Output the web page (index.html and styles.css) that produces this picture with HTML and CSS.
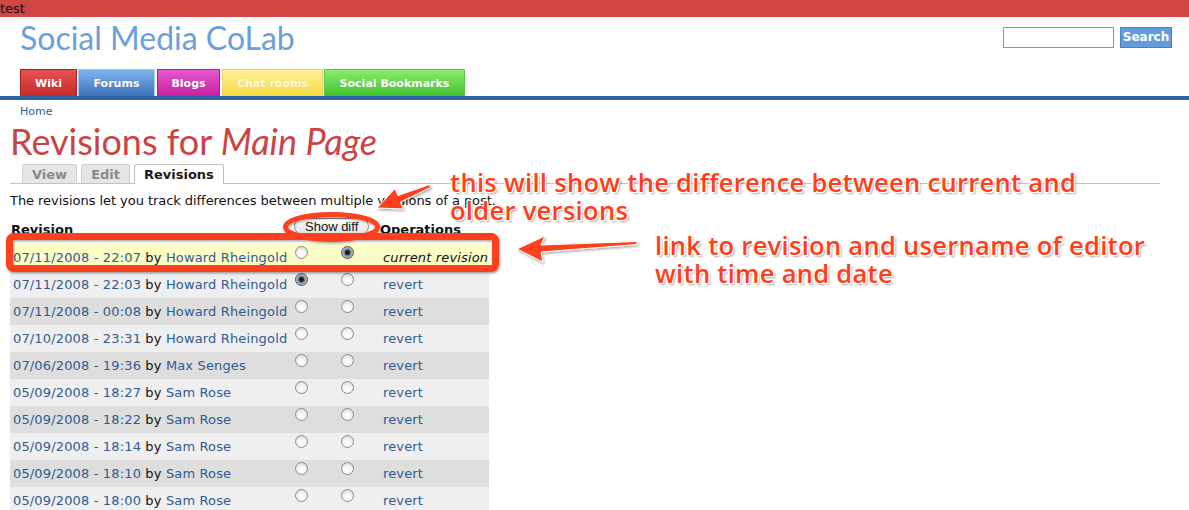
FILE: index.html
```html
<!DOCTYPE html>
<html lang="en">
<head>
<meta charset="utf-8">
<title>Revisions for Main Page | Social Media CoLab</title>
<link rel="stylesheet" href="styles.css">
</head>
<body>
<div class="topbar">test</div>
<header class="masthead">
  <div class="brand-row">
    <h1 class="site-name">Social Media CoLab</h1>
    <form class="search">
      <input class="search-input" type="text" aria-label="Search">
      <button class="search-btn" type="button">Search</button>
    </form>
  </div>
  <nav class="primary">
    <a class="ptab ptab-wiki" href="#">Wiki</a>
    <a class="ptab ptab-forums" href="#">Forums</a>
    <a class="ptab ptab-blogs" href="#">Blogs</a>
    <a class="ptab ptab-chat" href="#">Chat rooms</a>
    <a class="ptab ptab-bookmarks" href="#">Social Bookmarks</a>
  </nav>
</header>
<main class="content">
  <div class="breadcrumb"><a href="#">Home</a></div>
  <h2 class="page-title">Revisions for <em>Main Page</em></h2>
  <ul class="tabs">
    <li class="tab"><a href="#">View</a></li>
    <li class="tab"><a href="#">Edit</a></li>
    <li class="tab tab-active"><a href="#">Revisions</a></li>
  </ul>
  <p class="intro">The revisions let you track differences between multiple versions of a post.</p>
  <table class="revisions">
    <colgroup><col class="c-rev"><col class="c-r1"><col class="c-r2"><col class="c-ops"></colgroup>
    <thead>
      <tr><th>Revision</th><th colspan="2" class="th-diff"><span class="diff-btn">Show diff</span></th><th>Operations</th></tr>
    </thead>
    <tbody>
      <tr class="row-current"><td><a href="#">07/11/2008 - 22:07</a> by <a href="#">Howard Rheingold</a></td><td><span class="radio"></span></td><td><span class="radio on"></span></td><td><em>current revision</em></td></tr>
      <tr class="row-odd"><td><a href="#">07/11/2008 - 22:03</a> by <a href="#">Howard Rheingold</a></td><td><span class="radio on"></span></td><td><span class="radio"></span></td><td><a href="#">revert</a></td></tr>
      <tr class="row-even"><td><a href="#">07/11/2008 - 00:08</a> by <a href="#">Howard Rheingold</a></td><td><span class="radio"></span></td><td><span class="radio"></span></td><td><a href="#">revert</a></td></tr>
      <tr class="row-odd"><td><a href="#">07/10/2008 - 23:31</a> by <a href="#">Howard Rheingold</a></td><td><span class="radio"></span></td><td><span class="radio"></span></td><td><a href="#">revert</a></td></tr>
      <tr class="row-even"><td><a href="#">07/06/2008 - 19:36</a> by <a href="#">Max Senges</a></td><td><span class="radio"></span></td><td><span class="radio"></span></td><td><a href="#">revert</a></td></tr>
      <tr class="row-odd"><td><a href="#">05/09/2008 - 18:27</a> by <a href="#">Sam Rose</a></td><td><span class="radio"></span></td><td><span class="radio"></span></td><td><a href="#">revert</a></td></tr>
      <tr class="row-even"><td><a href="#">05/09/2008 - 18:22</a> by <a href="#">Sam Rose</a></td><td><span class="radio"></span></td><td><span class="radio"></span></td><td><a href="#">revert</a></td></tr>
      <tr class="row-odd"><td><a href="#">05/09/2008 - 18:14</a> by <a href="#">Sam Rose</a></td><td><span class="radio"></span></td><td><span class="radio"></span></td><td><a href="#">revert</a></td></tr>
      <tr class="row-even"><td><a href="#">05/09/2008 - 18:10</a> by <a href="#">Sam Rose</a></td><td><span class="radio"></span></td><td><span class="radio"></span></td><td><a href="#">revert</a></td></tr>
      <tr class="row-odd"><td><a href="#">05/09/2008 - 18:00</a> by <a href="#">Sam Rose</a></td><td><span class="radio"></span></td><td><span class="radio"></span></td><td><a href="#">revert</a></td></tr>
    </tbody>
  </table>
</main>

<div class="annotations">
  <svg class="marks" width="1189" height="510" viewBox="0 0 1189 510">
    <defs>
      <filter id="sh" x="-10%" y="-30%" width="130%" height="180%">
        <feDropShadow dx="1" dy="1.5" stdDeviation="1.2" flood-color="#000" flood-opacity="0.35"/>
      </filter>
    </defs>
    <g filter="url(#sh)" fill="none" stroke="#ff3f1c">
      <rect x="9.5" y="236.5" width="486" height="32" rx="4" stroke-width="7"/>
      <ellipse cx="331.5" cy="227" rx="46" ry="12.5" stroke-width="5"/>
    </g>
    <g filter="url(#sh)" fill="#ff3f1c" stroke="#fff" stroke-width="1" stroke-linejoin="round">
      <polygon points="377,208 403.4,209 400.5,202 430.6,187.4 429.4,184.6 397.9,195.6 395,188.6"/>
      <polygon points="517,249 545,236 541,245 637,241.5 637,244.5 541,252 543,262"/>
    </g>
  </svg>
  <p class="note note-diff">this will show the difference between current and<br>older versions</p>
  <p class="note note-link">link to revision and username of editor<br>with time and date</p>
</div>
</body>
</html>
```

FILE: styles.css
```css
* { box-sizing: border-box; }

html, body {
  margin: 0;
  padding: 0;
  background: #fff;
}

body {
  position: relative;
  width: 1189px;
  height: 510px;
  overflow: hidden;
  font-family: "DejaVu Sans", Verdana, sans-serif;
  color: #111;
}

a { color: #2f5c92; text-decoration: none; }

.topbar {
  height: 17px;
  background: #d24545;
  color: #1a0a0a;
  font-size: 13px;
  line-height: 17px;
}

/* masthead */
.masthead {
  border-bottom: 4px solid #2c63a1;
}

.brand-row {
  display: flex;
  justify-content: space-between;
  align-items: flex-start;
  height: 52px;
  padding: 0 17px 0 20px;
}

.site-name {
  margin: 3px 0 0;
  font-family: Lato, "DejaVu Sans", sans-serif;
  font-weight: 400;
  font-size: 32px;
  line-height: 36px;
  color: #6a9fdc;
}

.search {
  display: flex;
  gap: 6px;
  margin-top: 10px;
}

.search-input {
  width: 111px;
  height: 21px;
  border: 1px solid #7f99b5;
  background: #fff;
  margin: 0;
  padding: 0;
}

.search-btn {
  width: 52px;
  height: 21px;
  margin: 0;
  padding: 0;
  border: 1px solid #4d7fbb;
  background: #649bdc;
  color: #fff;
  font-family: "DejaVu Sans", sans-serif;
  font-weight: bold;
  font-size: 12px;
  line-height: 19px;
}

.primary {
  display: flex;
  gap: 1px;
  padding-left: 20px;
  height: 27px;
}

.ptab {
  display: flex;
  align-items: center;
  justify-content: center;
  height: 27px;
  color: #fff;
  font-weight: bold;
  font-size: 11px;
  border: 1px solid rgba(0,0,0,0.12);
  border-bottom: 0;
  text-shadow: 0 0 1px rgba(0,0,0,0.15);
}
.ptab-wiki { width: 57px; background: linear-gradient(#e65252, #c42a2a); border-color: #a82222; }
.ptab-forums { width: 77px; background: linear-gradient(#7cb4f0, #3d72b8); border-color: #9ec6ef; }
.ptab-blogs { width: 63px; margin-left: 1px; background: linear-gradient(#e858cf, #c6209f); border-color: #b01f8c; }
.ptab-chat { width: 101px; margin-left: 1px; background: linear-gradient(#fff09a, #f6dc3e); border-color: #e8d36a; color: #fffbe6; }
.ptab-bookmarks { width: 141px; background: linear-gradient(#8cec70, #42c22e); border-color: #5ac94a; }

/* content */
.content {
  padding: 0 29px 0 10px;
}

.breadcrumb {
  padding-left: 10px;
  margin-top: 5px;
  font-size: 11px;
  line-height: 14px;
}

.page-title {
  margin: 2px 0 0;
  font-family: Lato, "DejaVu Sans", sans-serif;
  font-weight: 400;
  font-size: 36px;
  line-height: 40px;
  color: #c94444;
}
.page-title em { font-style: italic; }

.tabs {
  list-style: none;
  margin: 3px 0 0;
  padding: 0 0 0 12px;
  display: flex;
  gap: 4px;
  border-bottom: 1px solid #c4c4c4;
  height: 20px;
}

.tab a {
  display: block;
  height: 19px;
  padding: 0 9px;
  background: #e6e6e6;
  border: 1px solid #d0d0d0;
  border-bottom: 0;
  border-radius: 3px 3px 0 0;
  color: #8a8a8a;
  font-weight: bold;
  font-size: 13px;
  line-height: 19px;
}
.tab-active a {
  height: 20px;
  background: #fff;
  border-color: #bdbdbd;
  color: #1a1a1a;
}

.intro {
  margin: 10px 0 0;
  font-size: 13px;
  letter-spacing: -0.05px;
  line-height: 14px;
}

.revisions {
  margin-top: 8px;
  border-collapse: collapse;
  table-layout: fixed;
  width: 479px;
  font-size: 13px;
  letter-spacing: 0.15px;
}
.c-rev { width: 284px; }
.c-r1 { width: 46px; }
.c-r2 { width: 39px; }
.c-ops { width: 110px; }

.revisions th {
  text-align: left;
  height: 28px;
  padding: 0 1px 1px;
  font-weight: bold;
  font-size: 13px;
  letter-spacing: 0;
  vertical-align: middle;
}
.revisions th.th-diff { padding-left: 0; }

.diff-btn {
  display: inline-block;
  height: 17px;
  padding: 0 10px;
  border: 1px solid #8a8a8a;
  border-radius: 9px;
  background: linear-gradient(#fff, #e2e2e2);
  font-family: "Liberation Sans", Arial, sans-serif;
  font-weight: normal;
  font-size: 13px;
  line-height: 15px;
  color: #111;
  position: relative;
  top: -3px;
}

.revisions td {
  height: 27px;
  padding: 0 3px;
  vertical-align: middle;
  white-space: nowrap;
}
.revisions td:nth-child(2) { padding-left: 1px; }
.revisions td:nth-child(3) { padding-left: 1px; }
.revisions td:nth-child(4) { padding-left: 4px; }

.row-current { background: #fdfdc6; }
.row-odd { background: #efefef; }
.row-even { background: #dedede; }

.radio {
  display: inline-block;
  width: 13px;
  height: 13px;
  border-radius: 50%;
  border: 1px solid #8c8c8c;
  background: radial-gradient(circle at 50% 70%, #fff 0, #f4f4f4 45%, #cfcfcf 100%);
  vertical-align: -1px;
  position: relative;
  top: -4px;
}
.radio.on {
  background: radial-gradient(circle at 50% 50%, #111 0, #222 2px, #6f7f8f 3px, #c6d0da 6px, #eef2f6 100%);
  border-color: #555;
}

/* annotations overlay */
.annotations {
  position: absolute;
  inset: 0;
  pointer-events: none;
}
.marks {
  position: absolute;
  left: 0;
  top: 0;
}
.note {
  position: absolute;
  margin: 0;
  font-family: "Open Sans", "DejaVu Sans", sans-serif;
  font-weight: 600;
  font-size: 25.5px;
  letter-spacing: 0.3px;
  line-height: 28px;
  color: #ff3f1c;
  white-space: nowrap;
  text-shadow:
    1px 0 0 #fff, -1px 0 0 #fff, 0 1px 0 #fff, 0 -1px 0 #fff,
    1px 1px 0 #fff, -1px -1px 0 #fff, 1px -1px 0 #fff, -1px 1px 0 #fff,
    2px 2px 2px rgba(0,0,0,0.35);
}
.note-diff { left: 450px; top: 168px; }
.note-link { left: 655px; top: 231px; }
```
